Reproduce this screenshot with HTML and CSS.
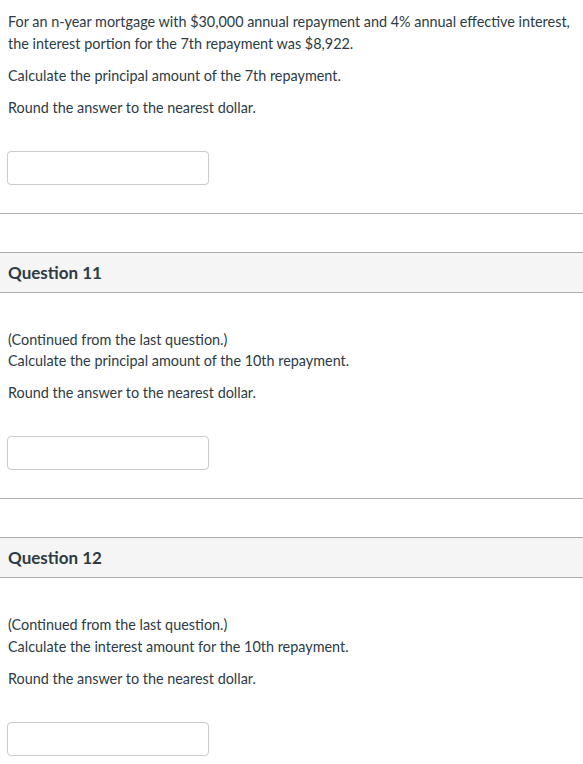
FILE: index.html
```html
<!DOCTYPE html>
<html>
<head>
<meta charset="utf-8">
<link rel="stylesheet" href="styles.css">
</head>
<body>
<div class="q-body first">
  <p>For an n-year mortgage with $30,000 annual repayment and 4% annual effective interest, the interest portion for the 7th repayment was $8,922.</p>
  <p>Calculate the principal amount of the 7th repayment.</p>
  <p>Round the answer to the nearest dollar.</p>
  <input class="answer" type="text">
</div>
<hr class="divider">

<div class="q-header">Question 11</div>
<div class="q-body">
  <p>(Continued from the last question.)<br>Calculate the principal amount of the 10th repayment.</p>
  <p>Round the answer to the nearest dollar.</p>
  <input class="answer" type="text">
</div>
<hr class="divider">

<div class="q-header">Question 12</div>
<div class="q-body">
  <p>(Continued from the last question.)<br>Calculate the interest amount for the 10th repayment.</p>
  <p>Round the answer to the nearest dollar.</p>
  <input class="answer" type="text">
</div>
</body>
</html>
```
FILE: styles.css
```css
html, body {
  margin: 0;
  padding: 0;
  background: #ffffff;
}
body {
  font-family: Lato, "Open Sans", sans-serif;
  font-size: 14.4px;
  line-height: 21.5px;
  color: #2d3b45;
}
.q-body {
  padding: 36px 8px 0 8px;
}
.q-body.first {
  padding-top: 11px;
}
.q-body p {
  margin: 0 0 10.5px 0;
}
.answer {
  display: block;
  box-sizing: border-box;
  width: 202px;
  height: 34px;
  margin: 32.5px 0 0 -1px;
  border: 1px solid #c7cdd1;
  border-radius: 4px;
  background: #fff;
  padding: 0 8px;
}
.divider {
  border: 0;
  border-top: 1px solid #acacac;
  margin: 28px 0 38px 0;
  height: 0;
}
.q-header {
  box-sizing: border-box;
  height: 41px;
  border-top: 1px solid #acacac;
  border-bottom: 1px solid #acacac;
  background: #f5f5f5;
  padding-left: 8px;
  font-size: 17px;
  font-weight: 700;
  line-height: 39px;
  color: #2d3b45;
}
```
